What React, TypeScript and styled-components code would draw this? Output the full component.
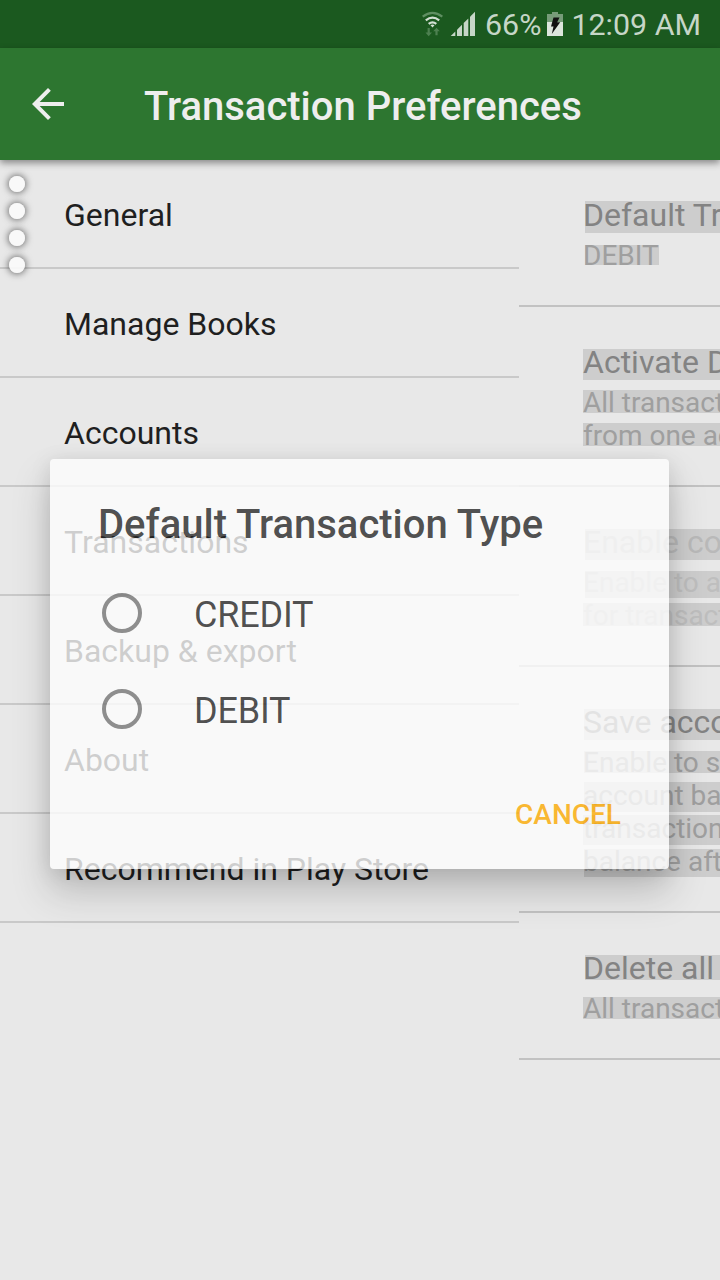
import React from "react";
import styled, { createGlobalStyle } from "styled-components";

const GlobalStyle = createGlobalStyle`
  *, *::before, *::after { box-sizing: border-box; }
  body { margin: 0; background: #e8e8e8; font-family: Roboto, sans-serif; }
`;

const Screen = styled.div`
  position: relative;
  display: flex;
  flex-direction: column;
  width: 720px;
  height: 1280px;
  overflow: hidden;
  background: #e8e8e8;
`;

const StatusBar = styled.header`
  display: flex;
  align-items: center;
  justify-content: flex-end;
  height: 48px;
  flex: none;
  padding: 2px 19px 0 0;
  background: #1b591f;
  color: #c6d6c7;
  font-size: 30.4px;
  line-height: 46px;
`;

const StatusIcons = styled.svg`
  flex: none;
  margin-top: -2px;
`;

const Percent = styled.span`
  width: 62px;
  margin-left: 9px;
`;

const Clock = styled.span`
  width: 138px;
  text-align: right;
`;

const AppBar = styled.div`
  z-index: 1;
  display: flex;
  align-items: center;
  height: 112px;
  flex: none;
  padding: 0 24px;
  background: #2d7630;
  color: #eeeeee;
  box-shadow: 0 3px 7px rgba(0, 0, 0, 0.42);
`;

const Title = styled.h1`
  margin: 5px 0 0 72px;
  font-size: 40px;
  font-weight: 500;
  line-height: 47px;
  white-space: nowrap;
`;

const Content = styled.main`
  display: flex;
  flex: 1;
  min-height: 0;
`;

const Categories = styled.nav`
  width: 519px;
  flex: none;
`;

const Category = styled.div`
  height: 109px;
  padding: 36px 0 0 64px;
  border-bottom: 2px solid #c9c9c9;
  color: #1f1f1f;
  font-size: 32px;
  line-height: 38px;
  white-space: nowrap;
`;

const Preferences = styled.section`
  flex: 1;
  min-width: 0;
  overflow: hidden;
`;

const Preference = styled.div`
  padding: 36px 0 33px;
  border-bottom: 2px solid #c2c2c2;
`;

type Mark = { $x: number; $y: number; $h: number; $w?: number; $dim?: boolean };

const Line = styled.div<Mark>`
  padding-left: 64px;
  overflow: hidden;
  white-space: nowrap;
  background: linear-gradient(#cdcdcd, #cdcdcd) no-repeat;
  background-position: ${(p) => p.$x}px ${(p) => p.$y}px;
  background-size: ${(p) => p.$w ?? 200}px ${(p) => p.$h}px;
`;

const PrefTitle = styled(Line)`
  height: 43px;
  font-size: 32px;
  line-height: 38px;
  color: ${(p) => (p.$dim ? "#b9b9b9" : "#838383")};
`;

const PrefSummary = styled(Line)`
  height: 33px;
  font-size: 28px;
  line-height: 33px;
  color: ${(p) => (p.$dim ? "#bebebe" : "#9f9f9f")};
`;

const Dots = styled.div`
  position: absolute;
  z-index: 2;
  top: 176px;
  left: 9px;
  display: flex;
  flex-direction: column;
  gap: 11px;
`;

const Dot = styled.span`
  width: 16px;
  height: 16px;
  border-radius: 50%;
  background: rgba(250, 250, 250, 0.92);
  box-shadow: 0 0 7px 1px rgba(0, 0, 0, 0.55);
`;

const Dialog = styled.div`
  position: absolute;
  z-index: 3;
  top: 459px;
  left: 50px;
  display: flex;
  flex-direction: column;
  width: 619px;
  height: 410px;
  padding: 42px 48px 0;
  border-radius: 4px;
  background: #fff;
  color: rgba(0, 0, 0, 0.87);
  box-shadow: 0 22px 36px rgba(0, 0, 0, 0.25), 0 3px 20px rgba(0, 0, 0, 0.13);
  opacity: 0.78;
`;

const DialogTitle = styled.h2`
  margin: 0 0 17px;
  font-size: 40px;
  font-weight: 500;
  line-height: 47px;
  white-space: nowrap;
`;

const Option = styled.div`
  display: flex;
  align-items: center;
  gap: 52px;
  height: 96px;
  padding-left: 4px;
  font-size: 36px;
  line-height: 42px;
  letter-spacing: -0.2px;
`;

const Radio = styled.span`
  width: 40px;
  height: 40px;
  border: 4px solid rgba(0, 0, 0, 0.54);
  border-radius: 50%;
`;

const OptionLabel = styled.span`
  padding-top: 4px;
`;

const Cancel = styled.button`
  align-self: flex-end;
  margin: 41px 0 0;
  padding: 0;
  border: 0;
  background: none;
  color: #ffab00;
  font: 500 28px/33px Roboto, sans-serif;
`;

const categories = [
  "General",
  "Manage Books",
  "Accounts",
  "Transactions",
  "Backup & export",
  "About",
  "Recommend in Play Store",
];

type Text = { text: string; x: number; y: number; h: number; w?: number };

const preferences: { dim?: boolean; title: Text; summary: Text[] }[] = [
  {
    title: { text: "Default Tr", x: 66, y: 5, h: 32 },
    summary: [{ text: "DEBIT", x: 66, y: 6, h: 20, w: 74 }],
  },
  {
    title: { text: "Activate D", x: 64, y: 6, h: 31 },
    summary: [
      { text: "All transact", x: 64, y: 4, h: 23 },
      { text: "from one ac", x: 64, y: 4, h: 23 },
    ],
  },
  {
    dim: true,
    title: { text: "Enable co", x: 66, y: 6, h: 31 },
    summary: [
      { text: "Enable to a", x: 66, y: 5, h: 27 },
      { text: "for transact", x: 64, y: 4, h: 23 },
    ],
  },
  {
    title: { text: "Save acco", x: 65, y: 6, h: 31 },
    summary: [
      { text: "Enable to s", x: 65, y: 5, h: 22 },
      { text: "account ba", x: 65, y: 3, h: 30 },
      { text: "transaction", x: 64, y: 3, h: 30 },
      { text: "balance aft", x: 65, y: 4, h: 28 },
    ],
  },
  {
    title: { text: "Delete all", x: 66, y: 6, h: 25 },
    summary: [{ text: "All transact", x: 64, y: 5, h: 22 }],
  },
];

export default function App() {
  return (
    <Screen>
      <GlobalStyle />
      <StatusBar>
        <StatusIcons width="56" height="28" viewBox="0 0 56 28" fill="none">
          <g strokeWidth="2.2">
            <path d="M2.700 6.700Q12.500-1 22.300 6.700" stroke="#5f8f62" />
            <path d="M5.800 10.300Q12.500 5 19.200 10.300" stroke="#d3e0d4" />
            <path d="M8.700 13.900Q12.500 10.700 16.300 13.900" stroke="#d3e0d4" />
          </g>
          <path d="M10.500 15.200Q12.500 13.800 14.500 15.200L12.500 17.500Z" fill="#d3e0d4" />
          <path d="M7.600 18h2.200v4.600h2.200L8.700 26.200 5.500 22.600h2.100z" fill="#4d8050" />
          <path d="M15.400 25.300h2.200v-4h2.200L16.500 17.800l-3.300 3.500h2.200z" fill="#4d8050" />
          <g fill="#c6d6c7">
            <path d="M30.700 26 35.300 21.400V26z" />
            <path d="M37 26v-6.300l5-5V26z" />
            <path d="M43.700 26V13l4.600-4.600V26z" />
            <path d="M50 26V6.700L55 1.800V26z" />
          </g>
        </StatusIcons>
        <Percent>66%</Percent>
        <StatusIcons width="16" height="24" viewBox="0 0 16 24">
          <path d="M5 0h6v2h5v8H0V2h5z" fill="#779c79" />
          <path d="M0 10h16v14H0z" fill="#dde6dd" />
          <path d="M6.500 5.500h6l-2.300 4.800h3L4.800 22l1.700-7.500h-2.500z" fill="#111" />
        </StatusIcons>
        <Clock>12:09 AM</Clock>
      </StatusBar>
      <AppBar>
        <svg width="48" height="48" viewBox="0 0 24 24" fill="#eee">
          <path d="M20 11H7.830l5.590-5.590L12 4l-8 8 8 8 1.410-1.410L7.830 13H20v-2z" />
        </svg>
        <Title>Transaction Preferences</Title>
      </AppBar>
      <Content>
        <Categories>
          {categories.map((name) => (
            <Category key={name}>{name}</Category>
          ))}
        </Categories>
        <Preferences>
          {preferences.map(({ dim, title, summary }) => (
            <Preference key={title.text}>
              <PrefTitle $x={title.x} $y={title.y} $h={title.h} $dim={dim}>
                {title.text}
              </PrefTitle>
              {summary.map((s) => (
                <PrefSummary key={s.text} $x={s.x} $y={s.y} $h={s.h} $w={s.w} $dim={dim}>
                  {s.text}
                </PrefSummary>
              ))}
            </Preference>
          ))}
        </Preferences>
      </Content>
      <Dots>
        <Dot />
        <Dot />
        <Dot />
        <Dot />
      </Dots>
      <Dialog role="dialog">
        <DialogTitle>Default Transaction Type</DialogTitle>
        <Option>
          <Radio />
          <OptionLabel>CREDIT</OptionLabel>
        </Option>
        <Option>
          <Radio />
          <OptionLabel>DEBIT</OptionLabel>
        </Option>
        <Cancel>CANCEL</Cancel>
      </Dialog>
    </Screen>
  );
}
